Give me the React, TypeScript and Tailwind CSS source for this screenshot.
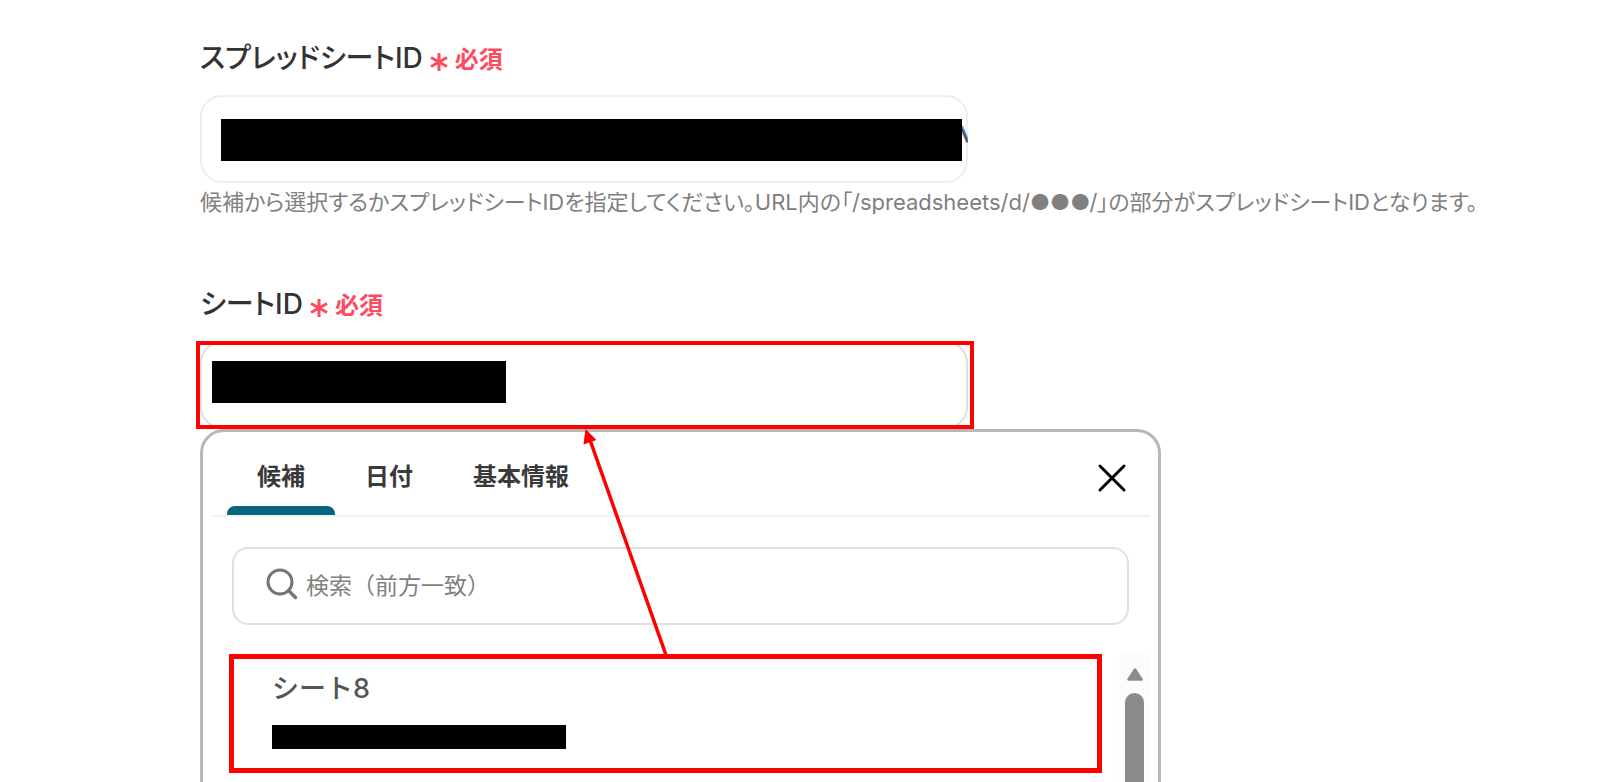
import { useState } from "react";

const TABS = ["候補", "日付", "基本情報"];

function FieldLabel({ htmlFor, text }: { htmlFor: string; text: string }) {
  return (
    <label
      htmlFor={htmlFor}
      className="mb-[19px] flex h-9 items-center gap-1.5 text-[28px] leading-9 font-medium text-[#333333]"
    >
      <span>{text}</span>
      <span className="flex items-center gap-1.5 pt-1 text-2xl leading-9 font-bold text-[#ff4b5f]">
        <svg width="20" height="20" viewBox="0 0 20 20" className="mt-1" aria-hidden="true">
          <path
            d="M10 1v18M2 5.5l16 9M18 5.5l-16 9"
            fill="none"
            stroke="currentColor"
            strokeWidth="3"
          />
        </svg>
        必須
      </span>
    </label>
  );
}

function SearchIcon() {
  return (
    <svg width="32" height="32" viewBox="0 0 32 32" className="mb-1 shrink-0" aria-hidden="true">
      <circle cx="14" cy="14" r="12" fill="none" stroke="#757575" strokeWidth="3" />
      <path d="M22.5 22.5l7 7" stroke="#757575" strokeWidth="3.5" strokeLinecap="round" />
    </svg>
  );
}

function CandidatePanel() {
  const [active, setActive] = useState(0);
  return (
    <section className="relative h-[480px] w-full max-w-[961px] rounded-[24px] border-[3px] border-[#b8b8b8] bg-white px-2">
      <div className="flex h-[85px] items-stretch justify-between border-b-2 border-[#f2f2f2] pr-5 pl-4">
        <div role="tablist" className="flex">
          {TABS.map((tab, i) => (
            <button
              key={tab}
              type="button"
              role="tab"
              aria-selected={i === active}
              onClick={() => setActive(i)}
              className="flex flex-col text-2xl font-bold text-[#3a3a3a]"
            >
              <span className="flex flex-1 items-center px-[30px] pt-4">{tab}</span>
              <span
                className={
                  i === active ? "h-[9px] w-full rounded-t-lg bg-[#06667f]" : "h-[9px] w-full"
                }
              />
            </button>
          ))}
        </div>
        <button type="button" aria-label="閉じる" className="flex items-center pt-2">
          <svg width="36" height="36" viewBox="0 0 36 36" aria-hidden="true">
            <path
              d="M6 6l24 24M30 6L6 30"
              stroke="#000"
              strokeWidth="3"
              strokeLinecap="round"
              fill="none"
            />
          </svg>
        </button>
      </div>

      <div className="mx-[21px] mt-[30px] flex h-[78px] items-center gap-2 rounded-2xl border-2 border-[#e0e0e0] pr-6 pl-8">
        <SearchIcon />
        <input
          type="text"
          aria-label="検索"
          placeholder="検索（前方一致）"
          className="min-w-0 flex-1 bg-transparent text-[23px] outline-none placeholder:text-[#808080] placeholder:opacity-100"
        />
      </div>

      <div className="mt-[29px] flex gap-[17px] pl-[18px]">
        <ul className="min-w-0 flex-1">
          <li>
            <button
              type="button"
              aria-label="シート8"
              className="flex h-[119px] w-full flex-col border-[5px] border-[#ff0000] pt-2.5 pl-[38px] text-left"
            >
              <span className="text-[27px] leading-10 font-medium text-[#555555]">シート8</span>
              <span className="mt-4 block h-6 w-[294px] bg-black" />
            </button>
          </li>
        </ul>
        <div className="flex h-[200px] w-[31px] flex-col items-center bg-[#fcfcfc] pt-3.5" aria-hidden="true">
          <svg width="16" height="13" viewBox="0 0 16 13">
            <path
              d="M8 1.5L14.5 11.5H1.5Z"
              fill="#8b8b8b"
              stroke="#8b8b8b"
              strokeWidth="2.5"
              strokeLinejoin="round"
            />
          </svg>
          <span className="mt-3 w-[19px] flex-1 rounded-t-full bg-[#8b8b8b]" />
        </div>
      </div>

      {/* Pointer from the chosen candidate up to the field */}
      <svg
        width="100"
        height="226"
        viewBox="0 0 100 226"
        className="pointer-events-none absolute -top-[3px] left-[373px]"
        aria-hidden="true"
      >
        <path d="M14 11L90 226" stroke="#ff0000" strokeWidth="3.5" fill="none" />
        <path d="M9.5 0L7.5 15.5L20.5 11Z" fill="#ff0000" />
      </svg>
    </section>
  );
}

export default function App() {
  return (
    <main className="h-screen overflow-hidden bg-white pt-10 pr-10 pl-[12.5%] font-['Inter','Noto_Sans_CJK_JP',sans-serif]">
      <div className="[font-feature-settings:'palt']">
        <FieldLabel htmlFor="spreadsheet-id" text="スプレッドシートID" />
      </div>
      <div className="relative w-full max-w-[768px]">
        <input
          id="spreadsheet-id"
          type="text"
          className="block h-[88px] w-full rounded-[22px] border-2 border-[#eceef1] bg-white px-5 text-2xl outline-none"
        />
        <span className="absolute top-6 right-1.5 left-[21px] h-[42px] bg-black" />
        <svg
          width="6"
          height="20"
          viewBox="0 0 6 20"
          className="absolute top-[30px] right-0"
          aria-hidden="true"
        >
          <path d="M0 1L6 15" stroke="#4a9be0" strokeWidth="2" />
          <path d="M0 6L5 18" stroke="#e0a878" strokeWidth="2" />
          <path d="M0 4L5.5 17" stroke="#3c3c50" strokeWidth="1.5" />
        </svg>
      </div>
      <p className="mt-[5px] text-[22px] leading-7 text-[#808080] [font-feature-settings:'palt']">
        候補から選択するかスプレッドシートIDを指定してください。URL内の「/spreadsheets/d/●●●/」の部分がスプレッドシートIDとなります。
      </p>

      <div className="mt-[70px] [font-feature-settings:'palt']">
        <FieldLabel htmlFor="sheet-id" text="シートID" />
      </div>
      <div className="relative w-full max-w-[768px]">
        <input
          id="sheet-id"
          type="text"
          className="block h-[88px] w-full rounded-[22px] border-2 border-[#dedede] bg-white px-5 text-2xl outline-none"
        />
        <span className="absolute top-5 left-3 h-[42px] w-[294px] bg-black" />
        <span className="pointer-events-none absolute inset-y-0 -right-1.5 -left-1 z-10 border-4 border-[#ff0000]" />
      </div>
      <CandidatePanel />
    </main>
  );
}
